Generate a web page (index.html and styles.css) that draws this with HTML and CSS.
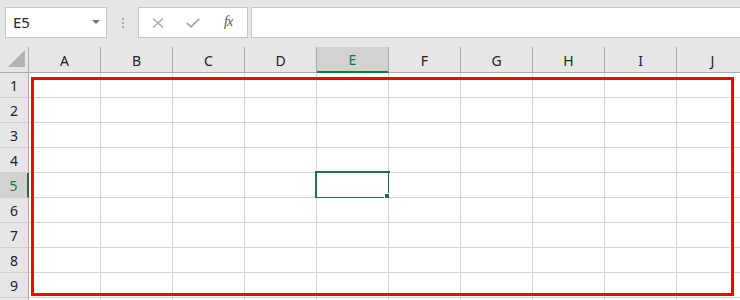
FILE: index.html
```html
<!DOCTYPE html>
<html lang="ja">
  <head>
    <meta charset="UTF-8" />
    <title>Sheet</title>
    <link rel="stylesheet" href="styles.css">
  </head>
  <body>
    <div class="toolbar">
      <div class="name-box">
        <span class="name-text">E5</span>
        <span class="name-arrow"></span>
      </div>
      <div class="grip"><i></i><i></i><i></i></div>
      <div class="fx-buttons">
        <svg class="fx-icon" width="12" height="10" viewBox="0 0 12 10">
          <path d="M1 0.5 L11 9.5 M11 0.5 L1 9.5" stroke="#a6a6a6" stroke-width="1.3" fill="none" />
        </svg>
        <svg class="fx-icon" width="14" height="10" viewBox="0 0 14 10">
          <path d="M0.8 4.8 L5 8.8 L13.2 0.8" stroke="#a6a6a6" stroke-width="1.8" fill="none" />
        </svg>
        <span class="fx-label">fx</span>
      </div>
      <div class="formula-input"></div>
    </div>

    <div class="sheet">
      <div class="row head">
        <div class="corner"><span class="corner-tri"></span></div>
        <div class="col">A</div>
        <div class="col">B</div>
        <div class="col">C</div>
        <div class="col">D</div>
        <div class="col active">E</div>
        <div class="col">F</div>
        <div class="col">G</div>
        <div class="col">H</div>
        <div class="col">I</div>
        <div class="col">J</div>
      </div>
      <div class="body" id="body"></div>
      <div class="frame"></div>
    </div>

    <script>
      const body = document.getElementById('body');

      // row 10 is only a sliver at the bottom edge, so it gets no number
      for (let r = 1; r <= 10; r++) {
        const row = document.createElement('div');
        row.className = 'row';
        const num = document.createElement('div');
        num.className = r === 5 ? 'num active' : 'num';
        if (r < 10) num.textContent = r;
        row.appendChild(num);
        for (let c = 0; c < 10; c++) {
          const cell = document.createElement('div');
          cell.className = 'cell';
          if (r === 5 && c === 4) {
            const sel = document.createElement('div');
            sel.className = 'selection';
            const handle = document.createElement('span');
            handle.className = 'handle';
            sel.appendChild(handle);
            cell.appendChild(sel);
          }
          row.appendChild(cell);
        }
        body.appendChild(row);
      }
    </script>
  </body>
</html>
```

FILE: styles.css
```css
* {
  margin: 0;
  padding: 0;
  box-sizing: border-box;
}

body {
  font-family: "Noto Sans", "Noto Sans CJK JP", sans-serif;
  background-color: #e6e6e6;
  width: 740px;
  height: 300px;
  overflow: hidden;
}

.toolbar {
  display: flex;
  align-items: flex-start;
  height: 47px;
  padding: 7px 0 0 5px;
}

.name-box {
  width: 102px;
  height: 31px;
  background-color: #ffffff;
  border: 1px solid #c6c6c6;
  display: flex;
  align-items: center;
  justify-content: space-between;
  padding: 0 6px 0 7px;
}

.name-text {
  font-size: 15px;
  color: #262626;
  line-height: 1;
}

.name-arrow {
  width: 0;
  height: 0;
  border-left: 4px solid transparent;
  border-right: 4px solid transparent;
  border-top: 4px solid #777777;
  margin-top: -1px;
}

.grip {
  width: 31px;
  height: 31px;
  display: flex;
  flex-direction: column;
  align-items: center;
  justify-content: center;
  gap: 2px;
}

.grip i {
  display: block;
  width: 2px;
  height: 2px;
  background-color: #a8a8a8;
}

.fx-buttons {
  width: 110px;
  height: 31px;
  background-color: #ffffff;
  border: 1px solid #c6c6c6;
  display: flex;
  align-items: center;
  padding-left: 13px;
}

.fx-icon {
  display: block;
}

.fx-icon + .fx-icon {
  margin-left: 22px;
}

.fx-label {
  font-family: "Liberation Serif", serif;
  font-style: italic;
  font-size: 14px;
  color: #555555;
  margin-left: 24px;
  margin-top: -2px;
  letter-spacing: -1px;
}

.formula-input {
  flex: 1;
  margin-left: 3px;
  height: 31px;
  background-color: #ffffff;
  border: 1px solid #c6c6c6;
  border-right: none;
}

.sheet {
  position: relative;
}

.row {
  display: flex;
}

.head {
  height: 26px;
  border-bottom: 1px solid #ababab;
}

.corner {
  position: relative;
  flex: 0 0 29px;
  border-right: 1px solid #ababab;
}

.corner-tri {
  position: absolute;
  right: 3px;
  bottom: 5px;
  width: 0;
  height: 0;
  border-left: 17px solid transparent;
  border-bottom: 17px solid #b4b4b4;
}

.col {
  flex: 0 0 72px;
  border-right: 1px solid #ababab;
  font-size: 14px;
  color: #222222;
  display: flex;
  align-items: center;
  justify-content: center;
  padding-top: 1px;
}

.col.active {
  background-color: #d2d2d2;
  color: #217346;
  border-bottom: 2px solid #217346;
  margin-bottom: -1px;
}

.num {
  flex: 0 0 29px;
  height: 25px;
  background-color: #e6e6e6;
  border-right: 1px solid #ababab;
  border-bottom: 1px solid #d0d0d0;
  font-size: 14px;
  color: #222222;
  display: flex;
  align-items: center;
  justify-content: center;
}

.num.active {
  background-color: #d2d2d2;
  color: #217346;
  border-right: 2px solid #217346;
}

.cell {
  position: relative;
  flex: 0 0 72px;
  height: 25px;
  background-color: #ffffff;
  border-right: 1px solid #d4d4d4;
  border-bottom: 1px solid #d4d4d4;
}

.selection {
  position: absolute;
  left: -2px;
  top: -2px;
  width: 75px;
  height: 28px;
  border: 2px solid #217346;
}

.handle {
  position: absolute;
  right: -4px;
  bottom: -4px;
  width: 8px;
  height: 8px;
  background-color: #217346;
  border: 1px solid #ffffff;
}

.frame {
  position: absolute;
  left: 31px;
  top: 30px;
  width: 703px;
  height: 219px;
  border: 3px solid #ff0000;
}
```
